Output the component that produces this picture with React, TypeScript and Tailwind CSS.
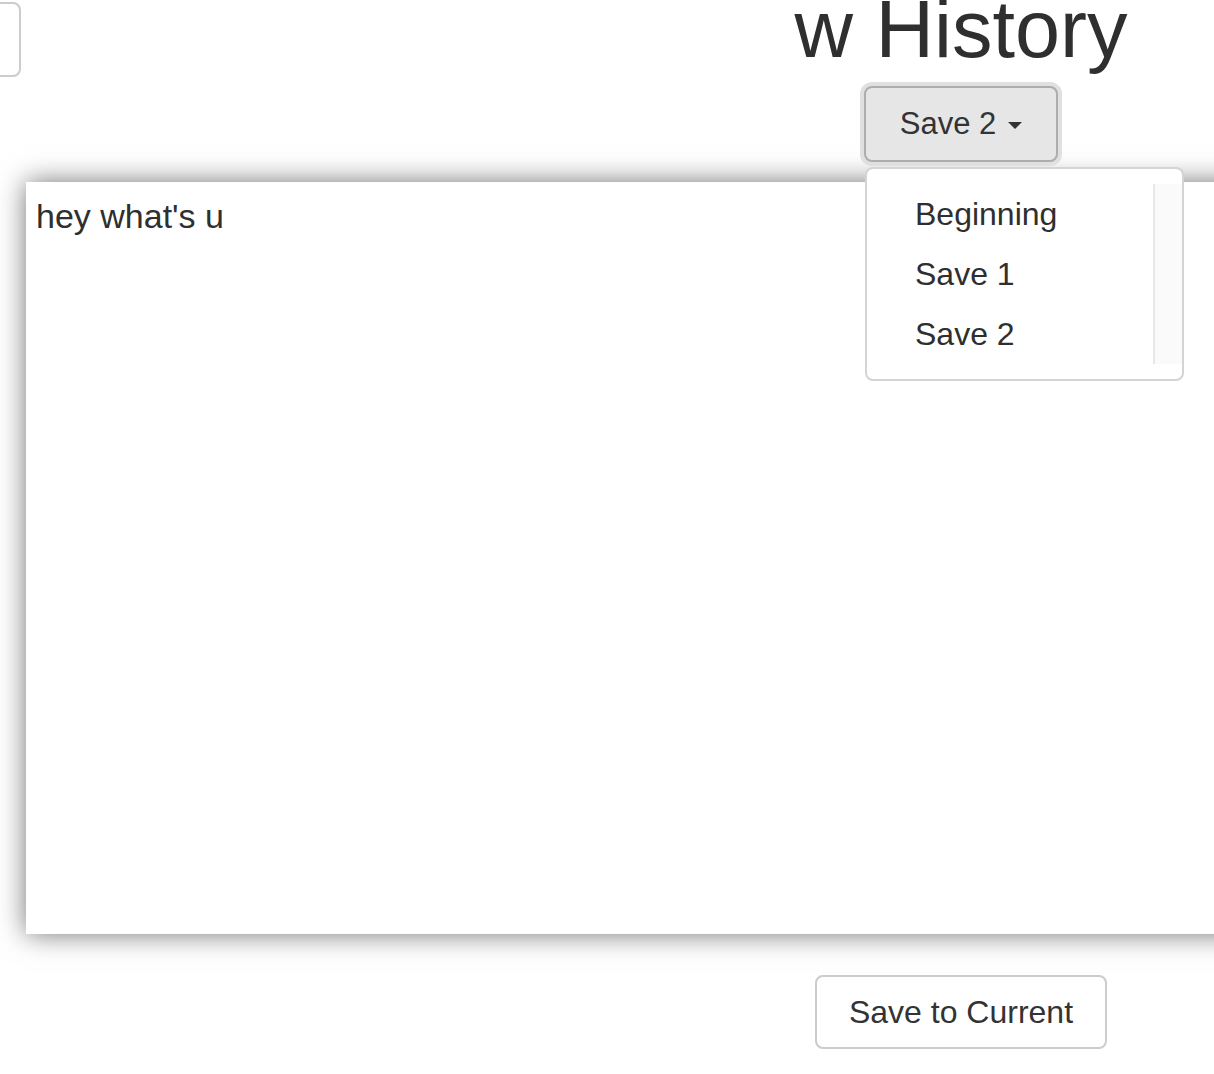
import React from "react";

export default function App() {
  return (
    <div className="relative w-[1214px] h-[1074px] overflow-hidden bg-white text-[#2f2f2f] font-['Liberation_Sans',Arial,sans-serif]">
      <div className="flex">
        <div className="shrink-0 ml-[-100px] mt-[2px] w-[121px] h-[75px] border-2 border-[#cccccc] rounded-[8px] bg-white" />
        <div className="shrink-0 ml-[687px] w-[506px] flex flex-col items-center">
          <h1 className="mt-[-11px] text-[81px] leading-[81px] font-normal whitespace-nowrap">w History</h1>
          <div className="relative mt-[16px] z-10">
            <button className="flex items-center justify-center gap-[12px] w-[194px] h-[76px] border-2 border-[#adadad] bg-[#e6e6e6] rounded-[8px] shadow-[0_0_0_4px_#e0e0e0] text-[31px] text-[#333]">
              <span>Save 2</span>
              <svg width="14" height="8" viewBox="0 0 14 8" className="mt-[3px]">
                <path d="M0 0 L14 0 L7 7 Z" fill="#333" />
              </svg>
            </button>
            <div className="absolute left-[1px] top-[calc(100%+5px)] w-[319px] h-[214px] border-2 border-[#d4d4d4] rounded-[8px] bg-white pt-[15px]">
              <div className="flex h-[180px]">
                <div className="flex-1 flex flex-col">
                  <div className="h-[60px] flex items-center pl-[48px] text-[32px]">Beginning</div>
                  <div className="h-[60px] flex items-center pl-[48px] text-[32px]">Save 1</div>
                  <div className="h-[60px] flex items-center pl-[48px] text-[32px]">Save 2</div>
                </div>
                <div className="w-[29px] bg-[#fafafa] border-l-2 border-[#e8e8e8]" />
              </div>
            </div>
          </div>
        </div>
      </div>
      <div className="ml-[26px] mt-[20px] w-[1250px] h-[752px] bg-white shadow-[0_0_26px_rgba(0,0,0,0.55)] pl-[10px] pt-[12px] text-[34px] leading-[44px]">
        hey what's u
      </div>
      <div className="ml-[708px] w-[506px] flex justify-center mt-[41px]">
        <button className="w-[292px] h-[74px] border-2 border-[#cccccc] rounded-[8px] bg-white text-[32px] text-[#333]">
          Save to Current
        </button>
      </div>
    </div>
  );
}
